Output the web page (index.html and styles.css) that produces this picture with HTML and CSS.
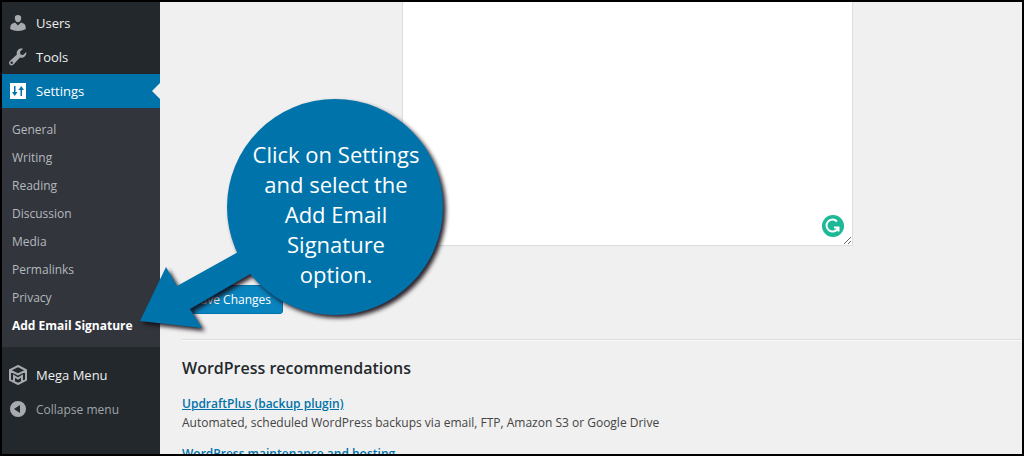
FILE: index.html
```html
<!DOCTYPE html>
<html lang="en">
  <head>
    <meta charset="UTF-8" />
    <meta name="viewport" content="width=device-width, initial-scale=1.0" />
    <title>Add Email Signature</title>
    <link rel="stylesheet" href="styles.css">
  </head>
  <body>
    <div class="admin">
      <nav class="sidebar">
        <a href="#" class="menu-item">
          <svg class="icon" viewBox="0 0 20 20"><path d="M10 9.200c-1.700 0-3.200-1.800-3.200-4.200C6.800 2.800 8 2 10 2s3.200.8 3.200 3c0 2.400-1.500 4.200-3.200 4.200zM7 9.500l3 3 3-3 3 1.200c1.200.6 1.800 2.600 1.800 5.300-4.500 2.600-11.100 2.600-15.600 0 0-2.700.6-4.700 1.800-5.300z" /></svg>
          Users
        </a>
        <a href="#" class="menu-item">
          <svg class="icon" viewBox="0 0 20 20"><path d="M16.700 9.500c-1.300 1.300-3.100 1.700-4.700 1.100l-6.500 7c-1 1-2.700 1.100-3.700.1s-1-2.700.1-3.700l7-6.500c-.5-1.600-.1-3.300 1.100-4.600C11.400 1.500 13.300 1.100 15 1.800L12 4.700l.4 2.700 2.800.5 3-2.900c.6 1.500-.2 3.200-1.500 4.500zM4.400 16.700c.6-.4.700-1.200.3-1.700s-1.200-.6-1.800-.2-.6 1.200-.2 1.800 1.200.5 1.700.1z" /></svg>
          Tools
        </a>
        <a href="#" class="menu-item current">
          <svg class="icon" viewBox="0 0 20 20"><path fill-rule="evenodd" d="M2 2h16v16H2zM6 5v6H4l2.700 4L9.500 11h-2V5zM12.500 15V9h-2l2.700-4L16 9h-2v6z" /></svg>
          Settings
        </a>
        <div class="submenu">
          <a href="#">General</a>
          <a href="#">Writing</a>
          <a href="#">Reading</a>
          <a href="#">Discussion</a>
          <a href="#">Media</a>
          <a href="#">Permalinks</a>
          <a href="#">Privacy</a>
          <a href="#" class="active">Add Email Signature</a>
        </div>
        <a href="#" class="menu-item">
          <svg class="icon line" viewBox="0 0 20 20"><path d="M10 1l8 4.200v9.600L10 19l-8-4.200V5.200zM2 5.500l8 4 8-4M6 16v-5l4 2.500 4-2.500v5" /></svg>
          Mega Menu
        </a>
        <button class="menu-item collapse">
          <svg class="icon" viewBox="0 0 20 20"><path fill-rule="evenodd" d="M10 2a8 8 0 1 0 0 16 8 8 0 0 0 0-16zM12 6v8l-6-4z" /></svg>
          Collapse menu
        </button>
      </nav>

      <main class="content">
        <div class="field">
          <textarea class="signature" aria-label="Email signature"></textarea>
          <svg class="grammar" viewBox="0 0 22 22"><circle cx="11" cy="11" r="11" /><path d="M15 6.500A6 6 0 1 0 16 13M12 12.500h4.500v4" /></svg>
        </div>
        <button class="save">Save Changes</button>
        <section class="recommend">
          <h2>WordPress recommendations</h2>
          <p><a href="#">UpdraftPlus (backup plugin)</a><br>Automated, scheduled WordPress backups via email, FTP, Amazon S3 or Google Drive</p>
          <p><a href="#">WordPress maintenance and hosting</a></p>
        </section>
      </main>
    </div>

    <div class="callout">
      <svg class="bubble" viewBox="0 0 310 240">
        <path d="M100 152L37 187 26 168 0 222 62 229 50 210 112 174z" />
        <circle cx="195" cy="108" r="108" />
      </svg>
      <p>Click on Settings<br>and select the<br>Add Email<br>Signature<br>option.</p>
    </div>
  </body>
</html>
```

FILE: styles.css
```css
* {
  box-sizing: border-box;
}

body {
  margin: 0;
  height: 100vh;
  overflow: hidden;
  border: 2px solid #000;
  background-color: #f0f0f0;
  color: #444;
  font-family: "Open Sans", "Noto Sans", sans-serif;
  font-size: 12px;
  position: relative;
}

.admin {
  display: flex;
  height: 100%;
}

.sidebar {
  width: 158px;
  flex-shrink: 0;
  padding-top: 4px;
  background-color: #23282d;
}

.menu-item {
  display: flex;
  align-items: center;
  gap: 8px;
  width: 100%;
  height: 34px;
  padding: 0 6px;
  border: none;
  background: none;
  color: #eee;
  font-family: inherit;
  font-size: 13px;
  text-decoration: none;
  white-space: nowrap;
}

.icon {
  width: 20px;
  height: 20px;
  fill: #a7abb0;
}

.icon.line {
  fill: none;
  stroke: #a7abb0;
  stroke-width: 2;
}

.current {
  position: relative;
  background-color: #0073aa;
  color: #fff;
}

.current .icon {
  fill: #fff;
}

.current::after {
  content: "";
  position: absolute;
  right: 0;
  top: 9px;
  border: 8px solid transparent;
  border-left: none;
  border-right-color: #f0f0f0;
}

.submenu {
  margin-bottom: 11px;
  padding: 8px 0 7px;
  background-color: #32353c;
}

.submenu a {
  display: block;
  padding: 0 10px;
  color: #b4b9be;
  line-height: 28px;
  text-decoration: none;
  white-space: nowrap;
}

.submenu .active {
  color: #fff;
  font-weight: bold;
}

.collapse {
  color: #a0a5aa;
  font-size: 12px;
}

.content {
  flex: 1;
  min-width: 0;
  padding-left: 22px;
}

.field {
  position: relative;
  width: 451px;
  max-width: calc(100% - 220px);
  margin-left: 220px;
}

.signature {
  display: block;
  width: 100%;
  height: 244px;
  border: 1px solid #ddd;
  border-top: none;
  background-color: #fff;
  outline: none;
}

.grammar {
  position: absolute;
  right: 9px;
  bottom: 9px;
  width: 22px;
  height: 22px;
  fill: #1cb898;
}

.grammar path {
  fill: none;
  stroke: #fff;
  stroke-width: 2;
}

.save {
  display: block;
  height: 29px;
  margin-top: 39px;
  padding: 0 11px;
  border: 1px solid #0073aa;
  border-radius: 3px;
  background-color: #0a84be;
  color: #fff;
  font-family: inherit;
  font-size: 12px;
}

.recommend {
  margin-top: 25px;
  border-top: 1px solid #ddd;
  box-shadow: inset 0 1px #fafafa;
}

h2 {
  margin: 0;
  padding: 16px 0 14px;
  color: #23282d;
  font-size: 16px;
  font-weight: 600;
  line-height: 24px;
}

.recommend p {
  margin: 0 0 12px;
  line-height: 19px;
}

.recommend a {
  color: #0073aa;
  font-weight: 600;
}

.callout {
  position: absolute;
  left: 138px;
  top: 97px;
  width: 310px;
  height: 240px;
}

.bubble {
  display: block;
  width: 100%;
  fill: #0073aa;
  overflow: visible;
  filter: drop-shadow(3px 3px 2px rgba(20, 10, 20, 0.9));
}

.callout p {
  position: absolute;
  left: 88px;
  top: 40px;
  width: 216px;
  margin: 0;
  color: #fff;
  font-size: 22px;
  line-height: 30px;
  text-align: center;
}
```
